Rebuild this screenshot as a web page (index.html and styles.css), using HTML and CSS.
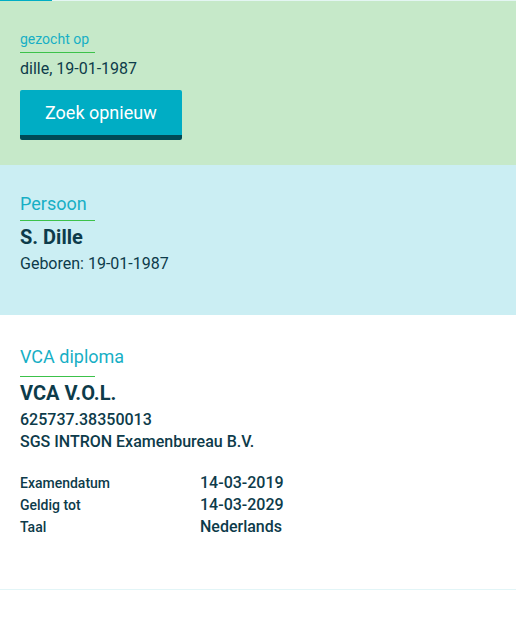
FILE: index.html
```html
<!DOCTYPE html>
<html lang="nl">
<head>
<meta charset="UTF-8">
<meta name="viewport" content="width=device-width, initial-scale=1.0">
<title>VCA diploma</title>
<link rel="stylesheet" href="styles.css">
</head>
<body>
    <div class="progress"><div class="progress-bar"></div></div>

    <section class="block search">
        <h3 class="block-title small">gezocht op</h3>
        <p class="query">dille, 19-01-1987</p>
        <button class="btn">Zoek opnieuw</button>
    </section>

    <section class="block person">
        <h3 class="block-title">Persoon</h3>
        <h2 class="name">S. Dille</h2>
        <p class="line">Geboren: 19-01-1987</p>
    </section>

    <section class="block diploma">
        <h3 class="block-title">VCA diploma</h3>
        <h2 class="name">VCA V.O.L.</h2>
        <p class="line strong">625737.38350013</p>
        <p class="line strong">SGS INTRON Examenbureau B.V.</p>
        <dl class="details">
            <dt>Examendatum</dt><dd>14-03-2019</dd>
            <dt>Geldig tot</dt><dd>14-03-2029</dd>
            <dt>Taal</dt><dd>Nederlands</dd>
        </dl>
    </section>
</body>
</html>
```

FILE: styles.css
```css
body {
    margin: 0;
    font-family: Roboto, "Liberation Sans", Arial, sans-serif;
    color: #0d3b4a;
    background: #ffffff;
}
.progress {
    height: 1px;
    background: #e4f6f3;
}
.progress-bar {
    width: 52px;
    height: 1px;
    background: #00adc4;
}
.block {
    padding: 0 20px;
}
.search {
    background: #c6e9c9;
    padding-top: 28px;
    height: 136px;
}
.person {
    background: #cbeef3;
    padding-top: 27px;
    height: 123px;
}
.diploma {
    padding-top: 30px;
    height: 244px;
    border-bottom: 1px solid #e2f5f7;
}
.block-title {
    margin: 0;
    width: 75px;
    font-size: 18px;
    line-height: 24px;
    font-weight: 400;
    color: #17afc5;
    white-space: nowrap;
    padding-bottom: 4px;
    border-bottom: 1px solid #3cc24a;
}
.diploma .block-title {
    padding-bottom: 7px;
}
.block-title.small {
    font-size: 14px;
    line-height: 20px;
    padding-bottom: 3px;
}
.query {
    margin: 5px 0 0;
    font-size: 16px;
    line-height: 22px;
}
.btn {
    display: block;
    margin-top: 10px;
    height: 50px;
    padding: 0 25px;
    font-family: inherit;
    font-size: 18px;
    color: #ffffff;
    background: #00adc4;
    border: 0;
    border-bottom: 5px solid #004a56;
    border-radius: 2px;
}
.name {
    margin: 3px 0 0;
    font-size: 20px;
    line-height: 26px;
    font-weight: 700;
}
.line {
    margin: 3px 0 0;
    font-size: 16px;
    line-height: 22px;
}
.line.strong {
    font-weight: 500;
}
.line.strong + .line.strong {
    margin-top: 0;
}
.details {
    display: grid;
    grid-template-columns: 180px 1fr;
    margin: 19px 0 0;
}
.details dt {
    font-size: 14px;
    line-height: 22px;
    font-weight: 500;
    height: 22px;
}
.details dd {
    margin: 0;
    font-size: 16px;
    line-height: 22px;
    font-weight: 500;
}
```
